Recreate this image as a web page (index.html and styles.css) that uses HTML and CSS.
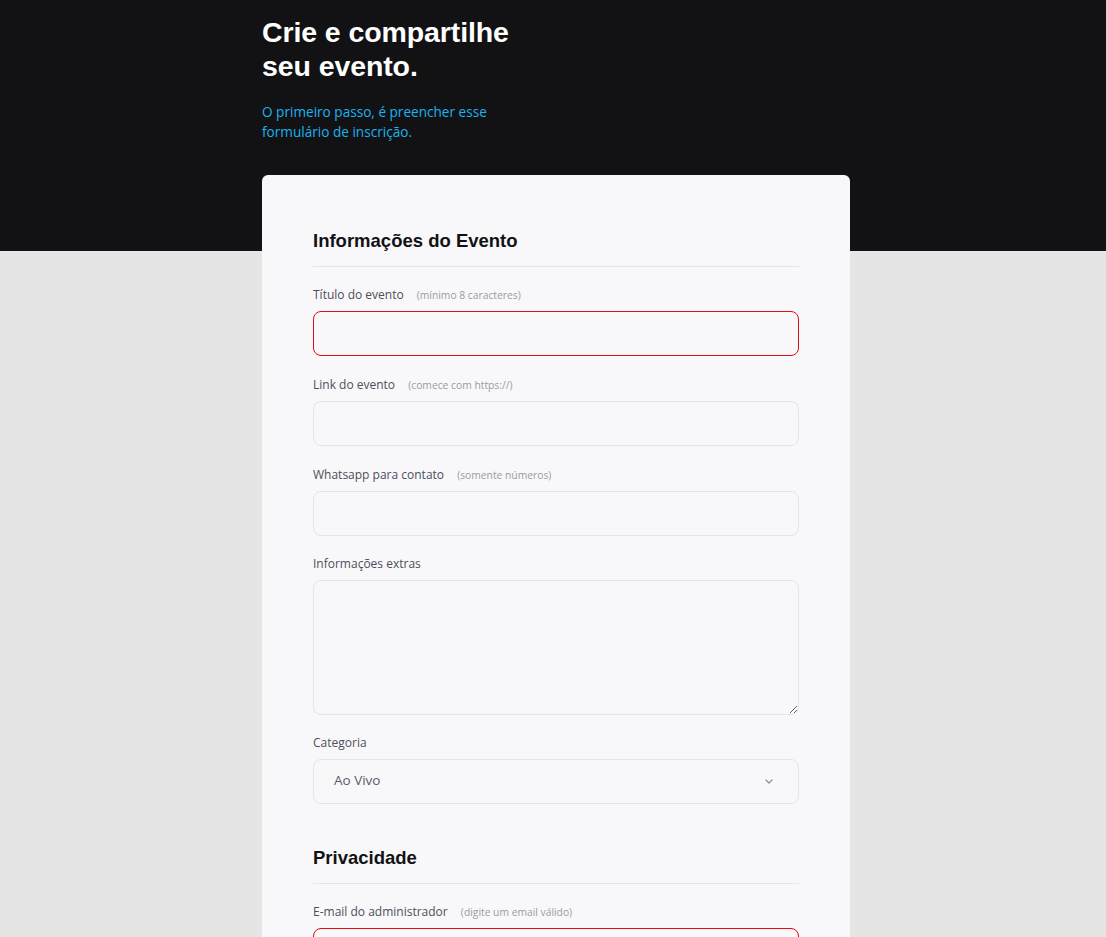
FILE: index.html
```html
<!DOCTYPE html>
<html lang="pt-BR">
<head>
<meta charset="utf-8">
<title>Crie e compartilhe seu evento</title>
<link rel="stylesheet" href="styles.css">
</head>
<body>
<main class="page">
  <header class="intro">
    <h1 class="intro-title">Crie e compartilhe<br>seu evento.</h1>
    <p class="intro-text">O primeiro passo, é preencher esse<br>formulário de inscrição.</p>
  </header>

  <form class="card">
    <fieldset class="section">
      <legend class="section-title">Informações do Evento</legend>

      <div class="field">
        <label class="label label-hinted" for="titulo">Título do evento <span class="hint">(mínimo 8 caracteres)</span></label>
        <input class="input input-error" id="titulo" type="text">
      </div>

      <div class="field">
        <label class="label label-hinted" for="link">Link do evento <span class="hint">(comece com https://)</span></label>
        <input class="input" id="link" type="text">
      </div>

      <div class="field">
        <label class="label label-hinted" for="whats">Whatsapp para contato <span class="hint">(somente números)</span></label>
        <input class="input" id="whats" type="text">
      </div>

      <div class="field">
        <label class="label" for="extras">Informações extras</label>
        <textarea class="input textarea" id="extras"></textarea>
      </div>

      <div class="field">
        <label class="label" for="categoria">Categoria</label>
        <div class="select">
          <span class="select-value">Ao Vivo</span>
          <svg class="select-icon" width="8" height="5" viewBox="0 0 8 5" aria-hidden="true">
            <path d="M1 1l3 3 3-3" fill="none" stroke="#8d8d99" stroke-width="1.2" stroke-linecap="round" stroke-linejoin="round"/>
          </svg>
        </div>
      </div>
    </fieldset>

    <fieldset class="section">
      <legend class="section-title">Privacidade</legend>

      <div class="field">
        <label class="label label-hinted" for="email">E-mail do administrador <span class="hint">(digite um email válido)</span></label>
        <input class="input input-error" id="email" type="text">
      </div>
    </fieldset>
  </form>
</main>
</body>
</html>
```

FILE: styles.css
```css
* {
  box-sizing: border-box;
}

html, body {
  margin: 0;
  padding: 0;
}

body {
  background: linear-gradient(to bottom, #121214 0, #121214 251px, #e5e5e5 251px, #e5e5e5 100%);
  min-height: 100vh;
  font-family: "Open Sans", "Noto Sans", sans-serif;
  color: #29292e;
}

.page {
  width: 588px;
  margin: 0 0 0 262px;
  padding: 15px 0 80px;
  display: flex;
  flex-direction: column;
}

.intro-title {
  margin: 0;
  font-family: "Liberation Sans", Arial, sans-serif;
  font-weight: 700;
  font-size: 28.5px;
  line-height: 34px;
  color: #ffffff;
  letter-spacing: -0.1px;
}

.intro-text {
  margin: 19px 0 0;
  font-size: 13.6px;
  line-height: 20px;
  color: #1bb3ef;
}

.card {
  margin-top: 33px;
  background: #f8f8fa;
  border-radius: 6px;
  padding: 54px 51px 60px;
  display: flex;
  flex-direction: column;
  gap: 42px;
}

.section {
  border: 0;
  margin: 0;
  padding: 0;
  min-width: 0;
  display: flex;
  flex-direction: column;
}

.section-title {
  padding: 0 0 13px;
  width: 100%;
  float: left;
  border-bottom: 1px solid #e4e4ec;
  font-family: "Liberation Sans", Arial, sans-serif;
  font-weight: 700;
  font-size: 18.5px;
  line-height: 24px;
  color: #121214;
}

.field {
  display: flex;
  flex-direction: column;
  margin-top: 18px;
}

.section-title + .field {
  margin-top: 17px;
}

.label {
  display: block;
  font-size: 12px;
  line-height: 20px;
  height: 20px;
  color: #4e4e5a;
  margin-bottom: 6px;
}

.label-hinted {
  line-height: 21px;
  height: 21px;
}

.hint {
  font-size: 10.3px;
  line-height: 1;
  color: #9a9aa6;
  margin-left: 10px;
}

.input {
  display: block;
  width: 100%;
  height: 45px;
  background: #f8f8fa;
  border: 1px solid #e4e4ec;
  border-radius: 8px;
  font-family: inherit;
  font-size: 14px;
  padding: 0 20px;
  outline: none;
}

.input-error {
  border-color: #e50914;
}

.textarea {
  height: 135px;
  resize: vertical;
  padding: 12px 20px;
}

.select {
  height: 45px;
  border: 1px solid #e4e4ec;
  border-radius: 8px;
  background: #f8f8fa;
  padding: 0 25px 3px 20px;
  display: flex;
  align-items: center;
  justify-content: space-between;
}

.select-value {
  font-size: 13.5px;
  color: #5a5a66;
}

.select-icon {
  display: block;
  margin-top: 3px;
}
```
